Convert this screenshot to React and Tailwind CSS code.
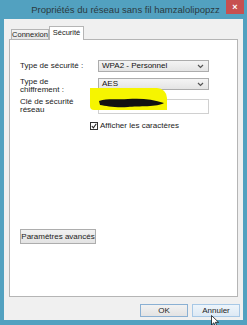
import React from 'react';

const font = { fontFamily: '"Liberation Sans", Arial, sans-serif' };

const Chevron = () => (
  <svg width="7" height="5" viewBox="0 0 7 5" className="shrink-0">
    <path d="M1 1 L3.5 3.5 L6 1" fill="none" stroke="#555" strokeWidth="1.2" />
  </svg>
);

const Select = ({ value }) => (
  <div className="flex items-center justify-between h-[12px] border border-[#acacac] bg-gradient-to-b from-[#f4f4f4] to-[#e4e4e4] pl-[3px] pr-[4px] text-[8px] leading-none text-[#111]">
    <span>{value}</span>
    <Chevron />
  </div>
);

const App = () => {
  return (
    <div className="relative w-[247px] h-[325px] overflow-hidden bg-[#52a1c0] flex flex-col" style={font}>
      {/* Title bar */}
      <div className="relative flex h-[19px] shrink-0 items-start justify-center pl-[4px]">
        <div className="whitespace-nowrap pt-[5px] text-[9.5px] leading-none text-[#2b3a40]">
          Propriétés du réseau sans fil hamzalolipopzz
        </div>
        <div className="absolute right-[3px] top-0 flex h-[14px] w-[18px] items-center justify-center bg-[#c75050] text-[9px] font-bold leading-none text-white">
          ×
        </div>
      </div>

      {/* Body */}
      <div className="mx-[4px] mb-[5px] flex flex-1 flex-col bg-[#f0f0f0] px-[5px] pt-[6px]">
        {/* Tabs */}
        <div className="relative z-10 ml-[2px] flex h-[14px] items-end">
          <div className="flex h-[10px] w-[38px] items-center justify-center border border-b-0 border-[#b5b5b5] bg-gradient-to-b from-[#f4f4f4] to-[#e6e6e6] text-[7.5px] leading-[10px] text-[#222]">
            Connexion
          </div>
          <div className="-mb-px flex h-[14px] w-[35px] items-start justify-center border border-b-0 border-[#b5b5b5] bg-white pt-[1px] text-[7.5px] leading-[10px] text-[#222]">
            Sécurité
          </div>
        </div>

        {/* Panel */}
        <div className="relative flex h-[258px] flex-col border border-[#b5b5b5] bg-white pl-[10px] pt-[20px] text-[8px] leading-[8px] text-[#222]">
          <div className="grid grid-cols-[78px_111px] gap-y-[6px]">
            <div className="flex items-center">Type de sécurité :</div>
            <Select value="WPA2 - Personnel" />
            <div>Type de<br />chiffrement :</div>
            <div className="flex items-start">
              <div className="w-full"><Select value="AES" /></div>
            </div>
            <div className="-mt-[2px]">Clé de sécurité<br />réseau</div>
            <div className="-mt-[1px] h-[15px] border border-[#d0d0d0] bg-white" />
          </div>

          <div className="ml-[70px] mt-[8px] flex items-center gap-[2px]">
            <div className="flex h-[8px] w-[8px] items-center justify-center border border-[#333] bg-white">
              <svg width="6" height="6" viewBox="0 0 6 6">
                <path d="M0.8 3 L2.4 4.8 L5.3 0.8" fill="none" stroke="#222" strokeWidth="1.1" />
              </svg>
            </div>
            <span>Afficher les caractères</span>
          </div>

          <div className="mt-auto mb-[52px] flex h-[15px] w-[76px] items-center justify-center border border-[#adadad] bg-gradient-to-b from-[#f2f2f2] to-[#e3e3e3] text-[8px] leading-none">
            Paramètres avancés
          </div>

          {/* Highlighted + scribbled key */}
          <div className="absolute left-[80px] top-[48px] h-[22px] w-[77px] rounded-tr-[10px] rounded-bl-[4px] bg-[#f6f500]" />
          <svg className="absolute left-[88px] top-[57px]" width="68" height="12" viewBox="0 0 68 12">
            <path d="M1 4 C 10 1, 20 3, 30 2 C 42 1, 55 2, 66 6 C 60 10, 40 9, 30 10 C 18 11, 8 9, 2 8 Z" fill="#111" />
          </svg>
        </div>

        {/* Dialog buttons */}
        <div className="-mr-[2px] mt-[7px] flex justify-end gap-[4px]">
          <div className="flex h-[13px] w-[48px] items-center justify-center border border-[#8ab0d3] bg-gradient-to-b from-[#f2f2f2] to-[#e3e3e3] text-[8px] leading-none text-[#222]">
            OK
          </div>
          <div className="flex h-[13px] w-[48px] items-center justify-center border border-[#a7c8e6] bg-gradient-to-b from-[#eef5fb] to-[#dde9f4] text-[8px] leading-none text-[#222]">
            Annuler
          </div>
        </div>
      </div>

      {/* Mouse cursor */}
      <svg className="absolute left-[211px] top-[315px]" width="9" height="12" viewBox="0 0 9 12">
        <path d="M0.5 0.5 L0.5 10 L2.8 7.8 L4.4 11.3 L5.8 10.7 L4.3 7.3 L7.6 7.3 Z" fill="#fff" stroke="#111" strokeWidth="0.8" />
      </svg>
    </div>
  );
};

export default App;
